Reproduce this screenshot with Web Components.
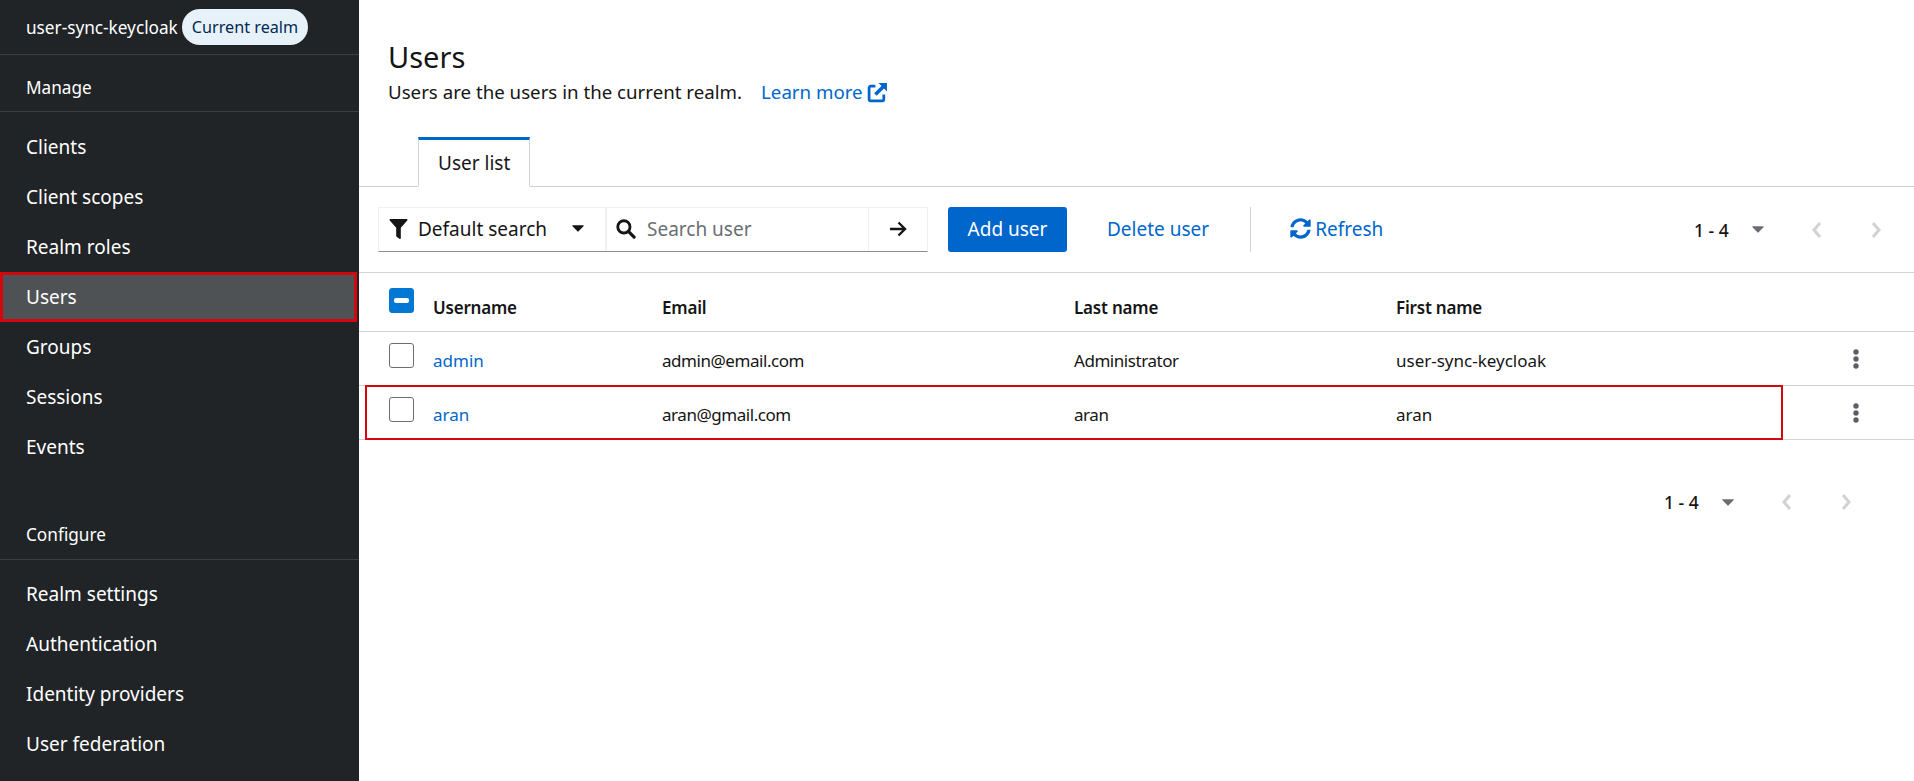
<!DOCTYPE html>
<html lang="en">
<head>
<meta charset="UTF-8">
<title>Users</title>
<style>
  html, body { margin: 0; height: 100%; }
  body { font-family: "Noto Sans", "Liberation Sans", sans-serif; overflow: hidden; }
  app-shell { height: 781px; }
</style>
</head>
<body>

<app-shell>
  <side-nav slot="nav">
    <nav-heading kind="realm">user-sync-keycloak<realm-badge>Current realm</realm-badge></nav-heading>
    <nav-heading>Manage</nav-heading>
    <nav-item first>Clients</nav-item>
    <nav-item>Client scopes</nav-item>
    <nav-item>Realm roles</nav-item>
    <nav-item current>Users</nav-item>
    <nav-item>Groups</nav-item>
    <nav-item>Sessions</nav-item>
    <nav-item>Events</nav-item>
    <nav-heading kind="section">Configure</nav-heading>
    <nav-item first>Realm settings</nav-item>
    <nav-item>Authentication</nav-item>
    <nav-item>Identity providers</nav-item>
    <nav-item>User federation</nav-item>
  </side-nav>
  <page-header></page-header>
  <tab-bar></tab-bar>
  <users-toolbar></users-toolbar>
  <users-table>
    <user-row username="admin" email="admin@email.com" last="Administrator" first="user-sync-keycloak"></user-row>
    <user-row username="aran" email="aran@gmail.com" last="aran" first="aran" marked></user-row>
  </users-table>
  <page-footer></page-footer>
</app-shell>

<script>
  const COLUMNS = '74px 229px 412px 322px 1fr 118px';

  function shadow(el, html) {
    el.attachShadow({mode: 'open'}).innerHTML = html;
  }

  const caret = `<svg width="12" height="7" viewBox="0 0 13 8"><path d="M.6.4h11.800a.5.5 0 0 1 .4.9L6.900 7.400a.6.6 0 0 1-.8 0L.2 1.300A.5.5 0 0 1 .6.4z" fill="currentColor"/></svg>`;

  class AppShell extends HTMLElement {
    constructor() {
      super();
      shadow(this, `
      <style>
        :host { display: grid; grid-template-columns: 359px 1fr; color: #151515; background: #fff; }
        main { display: flex; flex-direction: column; min-width: 0; }
      </style>
      <slot name="nav"></slot>
      <main><slot></slot></main>`);
    }
  }

  class SideNav extends HTMLElement {
    constructor() {
      super();
      shadow(this, `
      <style>
        :host { display: flex; flex-direction: column; height: 781px; overflow: hidden; background: #212427; color: #fff; font-size: 19px; }
      </style>
      <slot></slot>`);
    }
  }

  class NavHeading extends HTMLElement {
    constructor() {
      super();
      shadow(this, `
      <style>
        :host { display: flex; align-items: center; box-sizing: border-box; height: 57px; flex: none; padding: 9px 0 0 26px; font-size: 17.200px; border-bottom: 1px solid #3c3f42; white-space: nowrap; }
        :host([kind="realm"]) { height: 55px; padding-top: 0; }
        :host([kind="section"]) { height: 88px; padding-top: 37px; margin-bottom: -1px; }
      </style>
      <slot></slot>`);
    }
  }

  class RealmBadge extends HTMLElement {
    constructor() {
      super();
      shadow(this, `
      <style>
        :host { display: inline-flex; align-items: center; height: 36px; box-sizing: border-box; margin-left: 4px; padding: 0 10px; border-radius: 18px; background: #e7f1fa; color: #002952; font-size: 16.200px; }
      </style>
      <slot></slot>`);
    }
  }

  class NavItem extends HTMLElement {
    constructor() {
      super();
      shadow(this, `
      <style>
        :host { display: flex; align-items: center; box-sizing: border-box; height: 50px; flex: none; padding-left: 26px; }
        :host([first]) { margin-top: 10px; }
        :host([current]) { background: #4f5255; outline: 3px solid #d6060f; outline-offset: -3px; margin-right: 2px; }
      </style>
      <slot></slot>`);
    }
  }

  class PageHeader extends HTMLElement {
    constructor() {
      super();
      shadow(this, `
      <style>
        :host { display: block; padding: 37px 29px 0; height: 101px; box-sizing: border-box; }
        h1 { margin: 0; font-size: 29px; font-weight: 400; line-height: 40px; }
        p { margin: 0; display: flex; align-items: center; font-size: 18.700px; line-height: 30px; }
        a { display: inline-flex; align-items: center; gap: 4px; margin-left: 19px; color: #06c; text-decoration: none; }
      </style>
      <h1>Users</h1>
      <p>Users are the users in the current realm.
        <a>Learn more
          <svg width="21" height="21" viewBox="0 0 20 20"><path d="M8 4H3.500A1.500 1.500 0 0 0 2 5.500v11A1.500 1.500 0 0 0 3.500 18h11a1.500 1.500 0 0 0 1.500-1.500V12" fill="none" stroke="#06c" stroke-width="2.600"/><path d="M11 1h8v8l-2.800-2.800-7 7-2.400-2.400 7-7z" fill="#06c"/></svg>
        </a>
      </p>`);
    }
  }

  class TabBar extends HTMLElement {
    constructor() {
      super();
      shadow(this, `
      <style>
        :host { display: flex; box-sizing: border-box; height: 50px; margin-top: 36px; padding-left: 59px; border-bottom: 1px solid #d2d2d2; }
        .tab { display: flex; align-items: center; box-sizing: border-box; height: 50px; padding: 0 19px; font-size: 19px; border: 1px solid #d2d2d2; border-top: 3px solid #06c; border-bottom: 1px solid #fff; }
      </style>
      <div class="tab">User list</div>`);
    }
  }

  class PagerControl extends HTMLElement {
    constructor() {
      super();
      shadow(this, `
      <style>
        :host { display: flex; align-items: center; font-size: 17.500px; }
        b { font-weight: 500; width: 43px; }
        .caret { display: flex; width: 12px; margin-left: 15px; color: #6a6e73; }
        svg.chev { color: #d2d2d2; }
        .prev { margin-left: 47px; }
        .next { margin-left: 49px; margin-right: 32px; }
      </style>
      <b>1 - 4</b>
      <span class="caret">${caret}</span>
      <svg class="chev prev" width="11" height="18" viewBox="0 0 11 18"><path d="M9 2 3 9l6 7" fill="none" stroke="currentColor" stroke-width="3"/></svg>
      <svg class="chev next" width="11" height="18" viewBox="0 0 11 18"><path d="m2 2 6 7-6 7" fill="none" stroke="currentColor" stroke-width="3"/></svg>`);
    }
  }

  class UsersToolbar extends HTMLElement {
    constructor() {
      super();
      shadow(this, `
      <style>
        :host { display: flex; align-items: center; box-sizing: border-box; height: 86px; padding-left: 19px; border-bottom: 1px solid #d2d2d2; font-size: 19px; white-space: nowrap; }
        .group { display: flex; flex: none; height: 45px; box-sizing: border-box; border: 1px solid #f0f0f0; border-bottom-color: #8a8d90; }
        .group > div { display: flex; align-items: center; box-sizing: border-box; flex: none; padding-bottom: 2px; }
        .filter { width: 228px; padding-left: 10px; gap: 10px; border-right: 2px solid #f0f0f0; }
        .filter .caret { display: flex; margin-left: 15px; color: #151515; }
        .search { width: 262px; padding-left: 9px; gap: 11px; color: #6a6e73; border-right: 1px solid #f0f0f0; }
        .go { width: 58px; justify-content: center; }
        .primary { display: flex; align-items: center; justify-content: center; flex: none; box-sizing: border-box; width: 119px; height: 45px; margin-left: 20px; padding-bottom: 2px; border-radius: 3px; background: #06c; color: #fff; }
        .link { color: #06c; display: flex; align-items: center; padding-bottom: 2px; }
        .delete { margin-left: 40px; }
        .sep { width: 1px; height: 45px; margin-left: 41px; background: #d2d2d2; }
        .refresh { margin-left: 39px; gap: 4px; }
        pager-control { margin-left: auto; }
      </style>
      <div class="group">
        <div class="filter">
          <svg width="19" height="20" viewBox="0 0 17 19"><path d="M.9 0h15.200c.8 0 1.200.9.700 1.500L10.700 8.400V18c0 .8-.8 1.200-1.400.8l-2.600-2a1 1 0 0 1-.4-.8V8.400L.2 1.500C-.3.900.1 0 .9 0z" fill="#151515"/></svg>
          Default search
          <span class="caret">${caret}</span>
        </div>
        <div class="search">
          <svg width="20" height="20" viewBox="0 0 19 19"><circle cx="7.500" cy="7.500" r="5.800" fill="none" stroke="#151515" stroke-width="2.700"/><path d="m11.800 11.800 5.400 5.400" stroke="#151515" stroke-width="3" stroke-linecap="round"/></svg>
          Search user
        </div>
        <div class="go">
          <svg width="18" height="16" viewBox="0 0 18 16"><path d="M1 8h14M9.500 1.500 16 8l-6.500 6.500" fill="none" stroke="#151515" stroke-width="2.400"/></svg>
        </div>
      </div>
      <div class="primary">Add user</div>
      <div class="link delete">Delete user</div>
      <div class="sep"></div>
      <div class="link refresh">
        <svg width="21" height="21" viewBox="0 0 512 512"><path fill="#06c" d="M370.700 133.300C339.500 104 298.900 88 255.800 88c-77.500.1-144.300 53.200-162.800 126.900-1.300 5.400-6.100 9.200-11.700 9.200H24.100c-7.500 0-13.200-6.800-11.800-14.200C33.900 94.900 134.800 8 256 8c66.400 0 126.800 26.100 171.300 68.700L463 41c15.100-15.100 41-4.400 41 17V192c0 13.300-10.700 24-24 24H346c-21.400 0-32.100-25.900-17-41l41.700-41.700zM32 296h134c21.400 0 32.100 25.900 17 41l-41.700 41.700c31.200 29.300 71.800 45.300 114.900 45.300 77.400-.1 144.300-53.100 162.800-126.800 1.300-5.400 6.100-9.200 11.700-9.200h57.300c7.500 0 13.200 6.800 11.800 14.200C478.100 417.100 377.200 504 256 504c-66.400 0-126.800-26.100-171.300-68.700L49 471c-15.100 15.100-41 4.400-41-17V320c0-13.300 10.700-24 24-24z"/></svg>
        Refresh
      </div>
      <pager-control></pager-control>`);
    }
  }

  class CheckBox extends HTMLElement {
    constructor() {
      super();
      shadow(this, `
      <style>
        :host { display: block; box-sizing: border-box; width: 25px; height: 25px; border: 1px solid #6a6e73; border-radius: 3px; background: #fff; position: relative; }
        :host([mixed]) { border-color: #0078d4; background: #0078d4; }
        :host([mixed])::after { content: ""; position: absolute; left: 4px; top: 9px; width: 15px; height: 5px; border-radius: 2px; background: #fff; }
      </style>`);
    }
  }

  class UsersTable extends HTMLElement {
    constructor() {
      super();
      shadow(this, `
      <style>
        :host { display: block; font-size: 17px; }
        .head { display: grid; grid-template-columns: ${COLUMNS}; height: 59px; box-sizing: border-box; border-bottom: 1px solid #d2d2d2; font-weight: 600; letter-spacing: -.2px; }
        .head span { align-self: center; padding-top: 10px; }
        check-box { margin: 15px 0 0 30px; }
      </style>
      <div class="head">
        <check-box mixed></check-box>
        <span>Username</span><span>Email</span><span>Last name</span><span>First name</span>
      </div>
      <slot></slot>`);
    }
  }

  class UserRow extends HTMLElement {
    constructor() {
      super();
      const a = name => this.getAttribute(name);
      shadow(this, `
      <style>
        :host { display: grid; grid-template-columns: ${COLUMNS}; height: 54px; box-sizing: border-box; border-bottom: 1px solid #d2d2d2; position: relative; align-items: center; }
        check-box { margin: 0 0 7px 30px; align-self: center; }
        span { padding-top: 4px; }
        .tight { letter-spacing: -.45px; }
        a { color: #06c; }
        .more { display: flex; justify-content: flex-start; padding-left: 57px; }
        .mark { display: none; position: absolute; left: 6px; top: -1px; width: 1418px; height: 55px; box-sizing: border-box; border: 2px solid #d6060f; }
        :host([marked]) .mark { display: block; }
      </style>
      <check-box></check-box>
      <span><a>${a('username')}</a></span>
      <span class="tight">${a('email')}</span>
      <span class="tight">${a('last')}</span>
      <span>${a('first')}</span>
      <div class="more"><svg width="6" height="20" viewBox="0 0 6 20" fill="#5b5f63"><circle cx="3" cy="3" r="2.700"/><circle cx="3" cy="10" r="2.700"/><circle cx="3" cy="17" r="2.700"/></svg></div>
      <div class="mark"></div>`);
    }
  }

  class PageFooter extends HTMLElement {
    constructor() {
      super();
      shadow(this, `
      <style>
        :host { display: flex; justify-content: flex-end; margin-top: 42px; height: 40px; padding-right: 30px; }
      </style>
      <pager-control></pager-control>`);
    }
  }

  customElements.define('app-shell', AppShell);
  customElements.define('side-nav', SideNav);
  customElements.define('nav-heading', NavHeading);
  customElements.define('realm-badge', RealmBadge);
  customElements.define('nav-item', NavItem);
  customElements.define('page-header', PageHeader);
  customElements.define('tab-bar', TabBar);
  customElements.define('pager-control', PagerControl);
  customElements.define('users-toolbar', UsersToolbar);
  customElements.define('check-box', CheckBox);
  customElements.define('users-table', UsersTable);
  customElements.define('user-row', UserRow);
  customElements.define('page-footer', PageFooter);
</script>
</body>
</html>
